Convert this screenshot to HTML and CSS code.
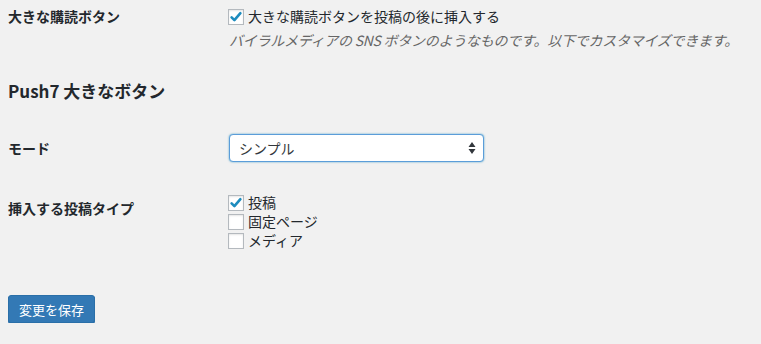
FILE: index.html
```html
<!DOCTYPE html>
<html lang="ja">
<head>
<meta charset="utf-8">
<title>Push7 設定</title>
<link rel="stylesheet" href="styles.css">
</head>
<body>
<div class="wrap">
  <div class="row row-first">
    <div class="th">大きな購読ボタン</div>
    <div class="td">
      <label class="check"><span class="box checked"><svg viewBox="0 0 16 16" width="16" height="16"><path d="M3.6 8.4 L6.4 11.2 L12.4 4.2" fill="none" stroke="#1e8cbe" stroke-width="2.6" stroke-linecap="round" stroke-linejoin="round"/></svg></span>大きな購読ボタンを投稿の後に挿入する</label>
      <p class="desc">バイラルメディアの SNS ボタンのようなものです。以下でカスタマイズできます。</p>
    </div>
  </div>

  <h2 class="heading">Push7 大きなボタン</h2>

  <div class="row row-mode">
    <div class="th th-mode">モード</div>
    <div class="td">
      <div class="select">
        <span class="select-text">シンプル</span>
        <svg class="arrows" viewBox="0 0 8 14" width="8" height="14"><path d="M4 1 L7.5 6 L0.5 6 Z M4 13 L7.5 8 L0.5 8 Z" fill="#32373c"/></svg>
      </div>
    </div>
  </div>

  <div class="row row-types">
    <div class="th th-types">挿入する投稿タイプ</div>
    <div class="td">
      <label class="check"><span class="box checked"><svg viewBox="0 0 16 16" width="16" height="16"><path d="M3.6 8.4 L6.4 11.2 L12.4 4.2" fill="none" stroke="#1e8cbe" stroke-width="2.6" stroke-linecap="round" stroke-linejoin="round"/></svg></span>投稿</label>
      <label class="check"><span class="box"></span>固定ページ</label>
      <label class="check"><span class="box"></span>メディア</label>
    </div>
  </div>

  <div class="submit">
    <button class="button-primary" type="button">変更を保存</button>
  </div>
</div>
</body>
</html>
```

FILE: styles.css
```css
html, body {
  margin: 0;
  padding: 0;
  background: #f1f1f1;
}
body {
  font-family: "Noto Sans CJK JP", "Noto Sans", "Liberation Sans", sans-serif;
  font-size: 14px;
  color: #23282d;
}
.wrap {
  padding: 0 8px;
}
.row {
  display: flex;
}
.th {
  width: 220px;
  flex: none;
  font-weight: 700;
  line-height: 19px;
}
.td {
  display: flex;
  flex-direction: column;
}
.row-first {
  padding-top: 7px;
}
.check {
  display: flex;
  align-items: center;
  height: 19px;
  line-height: 19px;
}
.box {
  width: 14px;
  height: 14px;
  border: 1px solid #b4b9be;
  background: #fff;
  box-shadow: inset 0 1px 2px rgba(0, 0, 0, 0.1);
  margin-right: 4px;
  position: relative;
  flex: none;
}
.box svg {
  position: absolute;
  left: -1px;
  top: -1px;
}
.desc {
  margin: 5px 0 0 1px;
  line-height: 19px;
  font-style: italic;
  color: #666;
  letter-spacing: -0.25px;
}
.heading {
  margin: 30px 0 0;
  font-size: 17px;
  line-height: 22px;
  font-weight: 600;
  color: #23282d;
}
.row-mode {
  padding-top: 32px;
  align-items: center;
}
.select {
  margin-left: 1px;
  height: 26px;
  border: 1px solid #5b9dd9;
  border-radius: 4px;
  background: #fff;
  box-shadow: 0 0 2px rgba(30, 140, 190, 0.8);
  display: flex;
  align-items: center;
  justify-content: space-between;
  padding: 0 7px 0 9px;
  box-sizing: content-box;
  width: 237px;
  color: #32373c;
}
.select-text {
  line-height: 26px;
}
.row-types {
  padding-top: 31px;
}
.th-types {
  padding-top: 6px;
}
.submit {
  padding-top: 45px;
}
.button-primary {
  width: 87px;
  height: 28px;
  border: 1px solid #2a6fa8;
  border-radius: 3px;
  background: #3379b5;
  color: #fff;
  font-family: "Noto Sans CJK JP", "Noto Sans", sans-serif;
  font-size: 13px;
  padding: 0;
  box-shadow: 0 1px 0 #2a6fa8;
}
```
